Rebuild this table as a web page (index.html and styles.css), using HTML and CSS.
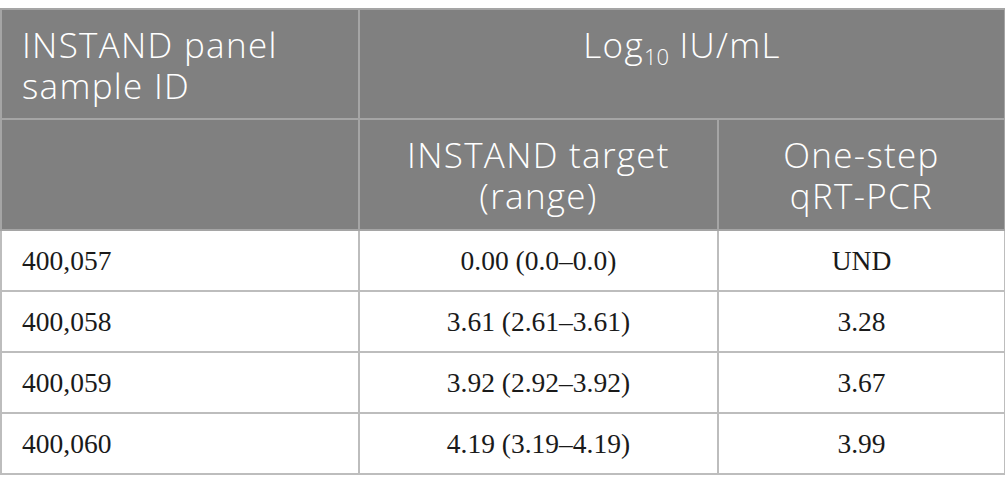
FILE: index.html
```html
<!DOCTYPE html>
<html>
<head>
<meta charset="utf-8">
<link rel="stylesheet" href="styles.css">
</head>
<body>
<table class="data">
  <colgroup>
    <col class="c1">
    <col class="c2">
    <col class="c3">
  </colgroup>
  <thead>
    <tr class="hrow1">
      <th class="hcell left">INSTAND panel<br>sample ID</th>
      <th class="hcell" colspan="2">Log<sub class="sub">10</sub> IU/mL</th>
    </tr>
    <tr class="hrow2">
      <th class="hcell left"></th>
      <th class="hcell">INSTAND target<br>(range)</th>
      <th class="hcell">One-step<br>qRT-PCR</th>
    </tr>
  </thead>
  <tbody>
    <tr class="brow"><td class="cell left">400,057</td><td class="cell">0.00 (0.0–0.0)</td><td class="cell">UND</td></tr>
    <tr class="brow"><td class="cell left">400,058</td><td class="cell">3.61 (2.61–3.61)</td><td class="cell">3.28</td></tr>
    <tr class="brow"><td class="cell left">400,059</td><td class="cell">3.92 (2.92–3.92)</td><td class="cell">3.67</td></tr>
    <tr class="brow"><td class="cell left">400,060</td><td class="cell">4.19 (3.19–4.19)</td><td class="cell">3.99</td></tr>
  </tbody>
</table>
</body>
</html>
```
FILE: styles.css
```css
html, body {
  margin: 0;
  padding: 0;
  background: #ffffff;
}
body {
  padding-top: 8px;
}
.data {
  border-collapse: collapse;
  width: 1004px;
  table-layout: fixed;
}
.c1 { width: 358px; }
.c2 { width: 359px; }
.c3 { width: 287px; }
.hrow1 { height: 110px; }
.hrow2 { height: 111px; }
.brow { height: 61px; }
.hcell {
  background: #808080;
  color: #ffffff;
  font-family: "Open Sans", sans-serif;
  font-weight: 350;
  font-size: 35px;
  letter-spacing: 1.3px;
  line-height: 41px;
  text-align: center;
  vertical-align: top;
  padding: 14px 20px 0 20px;
  border: 2px solid #a5a5a5;
}
.hcell.left { text-align: left; }
.sub {
  font-size: 22px;
  letter-spacing: 0;
  vertical-align: -7px;
  line-height: 0;
}
.cell {
  font-family: "Liberation Serif", "Times New Roman", serif;
  font-size: 27.5px;
  color: #1a1a1a;
  text-align: center;
  vertical-align: middle;
  padding: 0 20px;
  border: 2px solid #bdbdbd;
}
.cell.left { text-align: left; }
```
